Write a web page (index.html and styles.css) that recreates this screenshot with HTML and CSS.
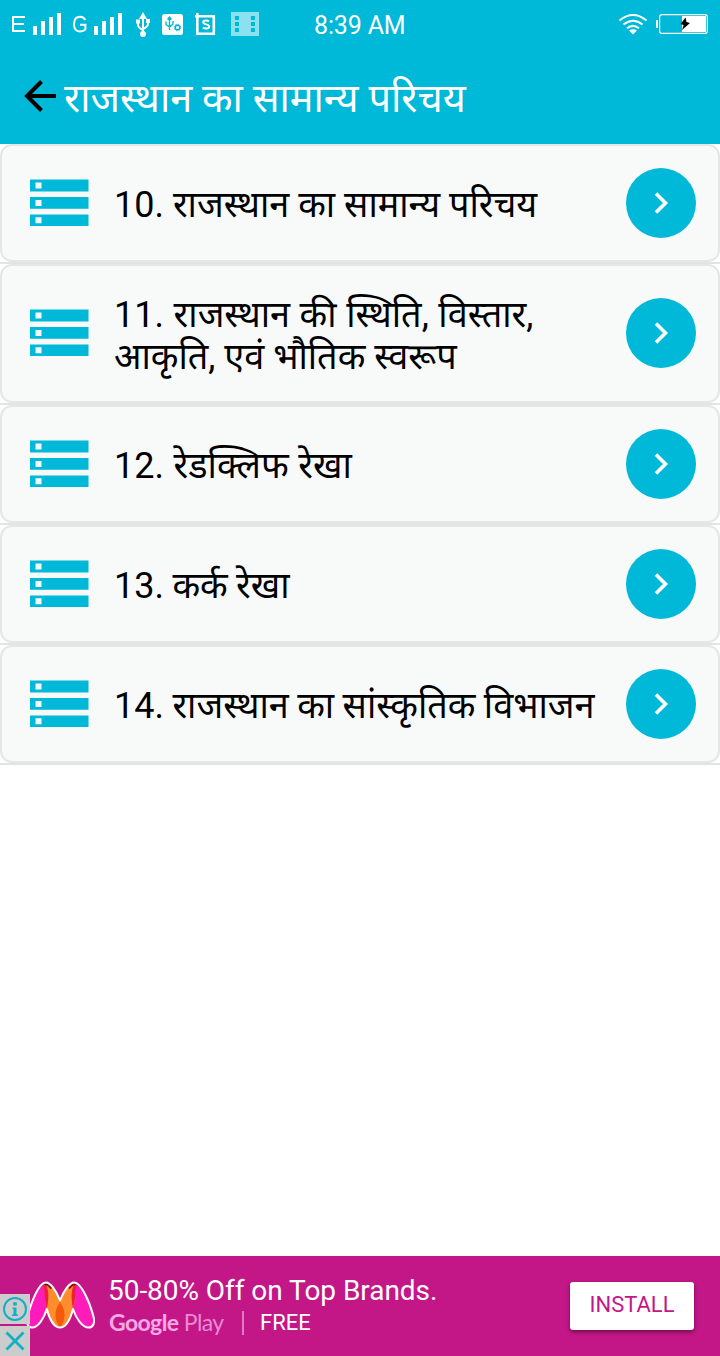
FILE: index.html
```html
<!DOCTYPE html>
<html lang="hi">
<head>
<meta charset="utf-8">
<title>राजस्थान का सामान्य परिचय</title>
<link rel="stylesheet" href="styles.css">
</head>
<body>
<svg class="defs" width="0" height="0" aria-hidden="true">
  <symbol id="list" viewBox="0 0 60 48">
    <path fill="#00b8d8" d="M0 .5h58.500v12H0zM0 18h58.500v11.700H0zM0 35.600h58.500v11.400H0z"/>
    <path fill="#f8faf9" d="M5.500 3.500h6v6h-6zM5.500 21h6v6h-6zM5.500 38.300h6v6h-6z"/>
  </symbol>
  <symbol id="next" viewBox="0 0 70 70">
    <circle cx="35" cy="35" r="35" fill="#00b8d8"/>
    <path d="M30 25.500l9.500 9.500-9.500 9.500" fill="none" stroke="#fff" stroke-width="3.600"/>
  </symbol>
</svg>
<div class="screen">
  <header class="top">
    <div class="status">
      <svg class="status-icons" width="270" height="48" viewBox="0 0 270 48" fill="#fff">
        <path d="M25 17H13v14h12M13 24h11" fill="none" stroke="#fff" stroke-width="2"/>
        <path d="M33 26h4v9h-4zM41 21h4v14h-4zM49 17h4v18h-4zM57 13h4v22h-4z"/>
        <path d="M85.200 20c-1-2.200-2.700-3.200-5-3.200-4 0-6.200 3-6.200 7.400s2.400 7.300 6.200 7.300c2.400 0 4.100-.7 5.200-2.100v-4.700H80" fill="none" stroke="#fff" stroke-width="2"/>
        <path d="M94 26h4v9h-4zM102 21h4v14h-4zM110 17h4v18h-4zM118 13h4v22h-4z"/>
        <path d="M143 12l4 7h-8z"/><circle cx="143" cy="34" r="3"/>
        <path d="M143 17v17M138 21v4q0 2.500 5 5M148 20v4q0 2.500-5 5" fill="none" stroke="#fff" stroke-width="2"/>
        <path d="M136 19.500h4v4h-4zM146 19h4v4h-4z"/>
        <rect x="162" y="14" width="21" height="21" rx="2.500"/>
        <g fill="none" stroke="#00b8d8" stroke-width="1.400">
          <path d="M169.500 18v12M166 21.500v3l3.500 2.500 3.500-3v-3M167.500 19.500l2-2.500 2 2.500"/>
          <circle cx="177.500" cy="27.500" r="2.300"/><circle cx="177.500" cy="27.500" r="3.300" stroke-dasharray="1.300 1.300" stroke-width="1"/>
        </g>
        <path d="M195 16.200h18.800v17.500H197.300V13" fill="none" stroke="#fff" stroke-width="2.600"/>
        <path d="M209 21.300c-1.500-1-5.800-1.400-5.800 1 0 2.800 6 1.400 6 4.300 0 2.600-4.600 2.200-6.400 1" fill="none" stroke="#fff" stroke-width="2"/>
        <rect x="231" y="12" width="28" height="24" fill="#8ce1ee"/>
        <path fill="#00b8d8" d="M235 16h4v4h-4zM235 22h4v4h-4zM235 28h4v4h-4zM251 16h4v4h-4zM251 22h4v4h-4zM251 28h4v4h-4z"/>
      </svg>
      <span class="clock">8:39 AM</span>
      <svg class="power" width="100" height="48" viewBox="615 0 100 48">
        <g fill="none" stroke="#fff" stroke-width="2">
          <path d="M619.500 20.500q13.500-11 27 0M623.500 24.500q9.500-7.600 19 0M627 28.300q6-4.800 12 0"/>
        </g>
        <path d="M629 30.500q4-2.600 8 0l-4 4z" fill="#fff"/>
        <rect x="659.600" y="14.600" width="47.800" height="18.800" rx="2.500" fill="none" stroke="#fff" stroke-width="1.200"/>
        <path d="M682 16h24v16h-24zM656 20h2v8h-2z" fill="#fff"/>
        <path d="M685.500 17.500l-5 6.500 3.200 1-1.700 5 8-7-3.500-1z" fill="#000"/>
      </svg>
    </div>
    <div class="appbar">
      <svg class="back" width="32" height="32" viewBox="0 0 32 32"><path d="M17.500 1.500L3 16l14.500 14.500M2.500 16H32" fill="none" stroke="#000" stroke-width="4"/></svg>
      <h1 class="title">राजस्थान का सामान्य परिचय</h1>
    </div>
  </header>
  <main class="list">
    <div class="item"><div class="row"><svg class="menu"><use href="#list"/></svg><p class="label">10. राजस्थान का सामान्य परिचय</p><svg class="go"><use href="#next"/></svg></div></div>
    <div class="item"><div class="row tall"><svg class="menu"><use href="#list"/></svg><p class="label"><span class="airy">11. राजस्थान की स्थिति, विस्तार,</span><br>आकृति, एवं भौतिक स्वरूप</p><svg class="go"><use href="#next"/></svg></div></div>
    <div class="item"><div class="row"><svg class="menu"><use href="#list"/></svg><p class="label airy">12. रेडक्लिफ रेखा</p><svg class="go"><use href="#next"/></svg></div></div>
    <div class="item"><div class="row"><svg class="menu"><use href="#list"/></svg><p class="label snug">13. कर्क रेखा</p><svg class="go"><use href="#next"/></svg></div></div>
    <div class="item"><div class="row"><svg class="menu"><use href="#list"/></svg><p class="label snug">14. राजस्थान का सांस्कृतिक विभाजन</p><svg class="go"><use href="#next"/></svg></div></div>
  </main>
  <footer class="ad">
    <svg class="logo" width="72" height="56" viewBox="26 1278 72 56">
      <defs>
        <path id="m" d="M45.500 1282.500c-7 1-14 19-18 34-1.500 6 0 11 4.500 11 6 0 12-9 14.800-18.500 2.500 9.500 7.200 18.500 13.200 18.500s10.500-9 13-18.500c3 9.500 9.500 18.500 15.500 18.500 5 0 6.500-5 5-11-4-15-12-33-19-34-5-.5-11 9-14.500 18-3.500-9-9.500-18.500-14.500-18z"/>
        <clipPath id="mc"><use href="#m"/></clipPath>
      </defs>
      <g clip-path="url(#mc)">
        <path d="M26 1278h72v56H26z" fill="#ff8c2d"/>
        <path d="M26 1278h19v14q0 11 1.800 17v25H26zM98 1278H75v14q0 11-2 17v25h25z" fill="#ff1cba"/>
        <path d="M44 1281q7 9 2.800 28-3-12-2.800-28M76 1281q-7 9-3 28 3-12 3-28" fill="#ea2138"/>
        <path d="M60 1302q-9 13 0 26 9-13 0-26" fill="#f4590b"/>
        <path d="M41 1286q4-5 10.500 2.500M69 1288.500q6-7.500 10-2.500" fill="none" stroke="#801018" stroke-width="2"/>
      </g>
      <use href="#m" fill="none" stroke="#fff" stroke-width="2" stroke-linejoin="round"/>
    </svg>
    <div class="copy">
      <div class="headline">50-80% Off on Top Brands.</div>
      <div class="store"><span class="play"><b>Google</b> <span class="dim">Play</span></span><i class="bar"></i><span>FREE</span></div>
    </div>
    <div class="install">INSTALL</div>
    <div class="choices">
      <svg width="30" height="30" viewBox="0 0 30 30"><circle cx="15" cy="15" r="11" fill="none" stroke="#12afc5" stroke-width="2"/><path d="M13.200 8.200h3.600v3.200h-3.600zM12.500 13.500h4v7h1.500v1.500h-6v-1.500h1.500V15h-1z" fill="#12afc5"/></svg>
      <svg width="30" height="30" viewBox="0 0 30 30"><path d="M6.500 6.500l17 17m0-17l-17 17" stroke="#12afc5" stroke-width="2.800"/></svg>
    </div>
  </footer>
</div>
</body>
</html>
```
FILE: styles.css
```css
* { box-sizing: border-box; }
body { margin: 0; font-family: Roboto, "Noto Sans Devanagari", "Noto Sans", sans-serif; }
svg { display: block; flex: none; }
.defs { position: absolute; }
.screen { width: 720px; height: 1356px; display: flex; flex-direction: column; background: #fff; overflow: hidden; }
.top { height: 144px; background: #00b8d8; color: #fff; }
.status { height: 48px; display: flex; align-items: center; }
.clock { margin-left: 44px; width: 301px; font-size: 25px; letter-spacing: -.15px; line-height: 30px; padding-top: 3px; white-space: nowrap; }
.appbar { height: 96px; display: flex; align-items: center; padding-left: 24px; }
.title { margin: 0 0 0 8px; padding-top: 6px; font-size: 39.7px; font-weight: 400; line-height: 48px; white-space: nowrap; }
.list { flex: 1; }
.item { border-bottom: 2px solid #e2e4e3; }
.row { height: 118px; padding: 0 22px 0 28px; display: flex; align-items: center; background: #f8faf9; border: 2px solid #e4e7e6; border-radius: 12px; }
.row.tall { height: 139px; padding-bottom: 1px; }
.menu { width: 60px; height: 48px; }
.label { flex: 1; margin: 0 0 0 24px; padding-top: 4px; font-size: 36px; line-height: 42px; color: #000; white-space: nowrap; }
.tall .label { padding-top: 6px; }
.airy { word-spacing: .7px; }
.snug { word-spacing: -.5px; }
.go { width: 70px; height: 70px; }
.ad { position: relative; height: 100px; background: #c31788; color: #fff; display: flex; align-items: center; padding: 0 26px; }
.copy { margin-left: 10px; flex: 1; }
.headline { font-size: 28px; letter-spacing: -.04px; line-height: 32px; padding-bottom: 2px; white-space: nowrap; }
.store { display: flex; align-items: center; font-size: 22px; line-height: 28px; }
.play { width: 134px; padding-left: 1px; color: #f6a9e4; font-family: Lato, sans-serif; font-size: 23px; line-height: 26px; letter-spacing: -.6px; padding-bottom: 2px; white-space: nowrap; }
.play b { font-weight: 700; }
.dim { color: #e98bd2; }
.bar { width: 2px; height: 24px; margin-right: 16px; background: #e07bc0; }
.install { width: 124px; height: 48px; border-radius: 3px; background: #fff; color: #c31788; font-size: 22px; line-height: 46px; text-align: center; box-shadow: 0 2px 4px rgba(60,0,40,.6); }
.choices { position: absolute; left: 0; bottom: 0; display: grid; gap: 2px; }
.choices svg { background: #ccc; }
```
